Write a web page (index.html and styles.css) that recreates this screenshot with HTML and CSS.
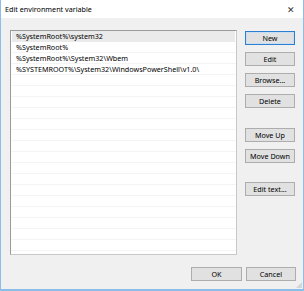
FILE: index.html
```html
<!DOCTYPE html>
<html lang="en">
<head>
    <meta charset="UTF-8">
    <meta name="viewport" content="width=device-width, initial-scale=1.0">
    <title>Edit environment variable</title>
    <link rel="stylesheet" href="styles.css">
</head>
<body>
    <div class="window">
        <div class="titlebar">
            <span class="title">Edit environment variable</span>
            <span class="close">&#x2715;</span>
        </div>

        <div class="main">
            <ul class="list">
                <li class="selected">%SystemRoot%\system32</li>
                <li>%SystemRoot%</li>
                <li>%SystemRoot%\System32\Wbem</li>
                <li>%SYSTEMROOT%\System32\WindowsPowerShell\v1.0\</li>
            </ul>

            <div class="side">
                <button class="btn default">New</button>
                <button class="btn">Edit</button>
                <button class="btn">Browse...</button>
                <button class="btn">Delete</button>
                <button class="btn move">Move Up</button>
                <button class="btn">Move Down</button>
                <button class="btn edittext">Edit text...</button>
            </div>
        </div>

        <div class="footer">
            <button class="btn ok">OK</button>
            <button class="btn">Cancel</button>
        </div>

        <div class="grip"></div>
    </div>
</body>
</html>
```

FILE: styles.css
```css
*{
    margin: 0;
    padding: 0;
    box-sizing: border-box;
}
body{
    font-family: "Noto Sans", "Open Sans", sans-serif;
    font-size: 7.2px;
    color: #000;
    background: #f0f0f0;
}
.window{
    position: relative;
    width: 304px;
    height: 291px;
    background: #f0f0f0;
    border-left: 1px solid #8cbce8;
    border-right: 1px solid #8cbce8;
    border-bottom: 2px solid #8cbce8;
    display: flex;
    flex-direction: column;
}
.titlebar{
    height: 18px;
    background: #fff;
    display: flex;
    align-items: center;
    justify-content: space-between;
    padding: 0 8px 0 4px;
}
.close{
    font-size: 9px;
    color: #333;
}
.main{
    display: flex;
    gap: 8px;
    padding: 12px 0 0 9px;
}
.list{
    list-style: none;
    width: 227px;
    height: 225px;
    background-color: #fff;
    background-image: repeating-linear-gradient(#fff 0 10px, #f4f4f4 10px 11px);
    background-origin: content-box;
    border: 1px solid #9a9a9a;
    border-right-color: #c8c8c8;
    border-bottom-color: #c8c8c8;
    padding: 0 1px;
}
.list li{
    height: 11px;
    line-height: 10px;
    padding-left: 4px;
    white-space: nowrap;
    overflow: hidden;
}
.list li.selected{
    background: #eaeaea;
}
.side{
    display: flex;
    flex-direction: column;
    gap: 7px;
    padding-top: 1px;
}
.btn{
    width: 50px;
    height: 14px;
    font-family: inherit;
    font-size: 7.2px;
    background: #e1e1e1;
    border: 1px solid #adadad;
    color: #000;
    line-height: 12px;
}
.btn.default{
    border: 1px solid #2f7fd0;
    box-shadow: inset 0 0 0 1px #c9ddf3;
}
.move{
    margin-top: 13px;
}
.edittext{
    margin-top: 12px;
}
.footer{
    display: flex;
    justify-content: flex-end;
    gap: 4px;
    padding: 12px 7px 0 0;
}
.btn.ok{
    width: 51px;
}
.grip{
    position: absolute;
    right: 1px;
    bottom: 1px;
    width: 6px;
    height: 6px;
    background: radial-gradient(circle, #b5b5b5 0.6px, transparent 0.8px) 0 0/2px 2px;
    clip-path: polygon(100% 0, 100% 100%, 0 100%);
}
```
